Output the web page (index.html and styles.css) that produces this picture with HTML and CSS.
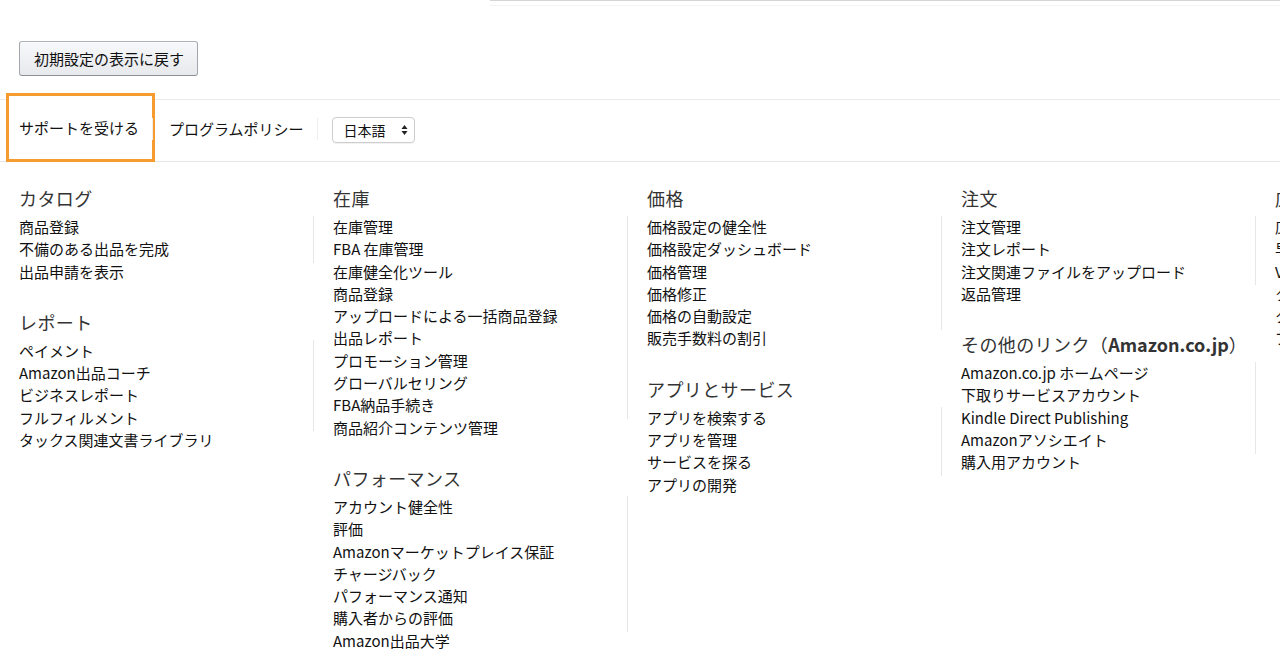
FILE: index.html
```html
<!DOCTYPE html>
<html lang="ja">
<head>
  <meta charset="utf-8">
  <title>セラーセントラル - メニュー</title>
  <link rel="stylesheet" href="styles.css">
</head>
<body>
  <div class="top-edge"></div>

  <div class="reset-row">
    <button class="reset-button">初期設定の表示に戻す</button>
  </div>

  <div class="footer-bar">
    <a href="#" class="footer-link focused">サポートを受ける</a>
    <span class="footer-sep"></span>
    <a href="#" class="footer-link">プログラムポリシー</a>
    <span class="footer-sep"></span>
    <div class="lang-select">
      <span>日本語</span>
      <svg width="7" height="12" viewBox="0 0 7 12">
        <path d="M3.5 1 L6.5 5 L0.5 5 Z" fill="#222"/>
        <path d="M3.5 11 L6.5 7 L0.5 7 Z" fill="#222"/>
      </svg>
    </div>
  </div>

  <div class="menu-grid">
    <div class="menu-column">
      <div class="menu-section">
        <h3>カタログ</h3>
        <ul>
          <li><a href="#">商品登録</a></li>
          <li><a href="#">不備のある出品を完成</a></li>
          <li><a href="#">出品申請を表示</a></li>
        </ul>
      </div>
      <div class="menu-section">
        <h3>レポート</h3>
        <ul>
          <li><a href="#">ペイメント</a></li>
          <li><a href="#">Amazon出品コーチ</a></li>
          <li><a href="#">ビジネスレポート</a></li>
          <li><a href="#">フルフィルメント</a></li>
          <li><a href="#">タックス関連文書ライブラリ</a></li>
        </ul>
      </div>
    </div>

    <div class="menu-column">
      <div class="menu-section">
        <h3>在庫</h3>
        <ul>
          <li><a href="#">在庫管理</a></li>
          <li><a href="#">FBA 在庫管理</a></li>
          <li><a href="#">在庫健全化ツール</a></li>
          <li><a href="#">商品登録</a></li>
          <li><a href="#">アップロードによる一括商品登録</a></li>
          <li><a href="#">出品レポート</a></li>
          <li><a href="#">プロモーション管理</a></li>
          <li><a href="#">グローバルセリング</a></li>
          <li><a href="#">FBA納品手続き</a></li>
          <li><a href="#">商品紹介コンテンツ管理</a></li>
        </ul>
      </div>
      <div class="menu-section">
        <h3>パフォーマンス</h3>
        <ul>
          <li><a href="#">アカウント健全性</a></li>
          <li><a href="#">評価</a></li>
          <li><a href="#">Amazonマーケットプレイス保証</a></li>
          <li><a href="#">チャージバック</a></li>
          <li><a href="#">パフォーマンス通知</a></li>
          <li><a href="#">購入者からの評価</a></li>
          <li><a href="#">Amazon出品大学</a></li>
        </ul>
      </div>
    </div>

    <div class="menu-column">
      <div class="menu-section">
        <h3>価格</h3>
        <ul>
          <li><a href="#">価格設定の健全性</a></li>
          <li><a href="#">価格設定ダッシュボード</a></li>
          <li><a href="#">価格管理</a></li>
          <li><a href="#">価格修正</a></li>
          <li><a href="#">価格の自動設定</a></li>
          <li><a href="#">販売手数料の割引</a></li>
        </ul>
      </div>
      <div class="menu-section">
        <h3>アプリとサービス</h3>
        <ul>
          <li><a href="#">アプリを検索する</a></li>
          <li><a href="#">アプリを管理</a></li>
          <li><a href="#">サービスを探る</a></li>
          <li><a href="#">アプリの開発</a></li>
        </ul>
      </div>
    </div>

    <div class="menu-column">
      <div class="menu-section">
        <h3>注文</h3>
        <ul>
          <li><a href="#">注文管理</a></li>
          <li><a href="#">注文レポート</a></li>
          <li><a href="#">注文関連ファイルをアップロード</a></li>
          <li><a href="#">返品管理</a></li>
        </ul>
      </div>
      <div class="menu-section">
        <h3>その他のリンク（<b>Amazon.co.jp</b>）</h3>
        <ul>
          <li><a href="#">Amazon.co.jp ホームページ</a></li>
          <li><a href="#">下取りサービスアカウント</a></li>
          <li><a href="#">Kindle Direct Publishing</a></li>
          <li><a href="#">Amazonアソシエイト</a></li>
          <li><a href="#">購入用アカウント</a></li>
        </ul>
      </div>
    </div>

    <div class="menu-column">
      <div class="menu-section">
        <h3>広告</h3>
        <ul>
          <li><a href="#">広告キャンペーンマネージャー</a></li>
          <li><a href="#">早期レビュー取得プログラム</a></li>
          <li><a href="#">Vine</a></li>
          <li><a href="#">クーポン</a></li>
          <li><a href="#">タイムセール</a></li>
          <li><a href="#">プロモーション</a></li>
        </ul>
      </div>
    </div>
  </div>
</body>
</html>
```

FILE: styles.css
```css
:root {
  --text-color: #111;
  --heading-color: #333;
  --line-color: #e7e7e7;
  --focus-color: #f59b2f;
}

html, body {
  overflow: hidden;
}

body {
  margin: 0;
  font-family: "Noto Sans CJK JP", "Noto Sans", sans-serif;
  color: var(--text-color);
  background: #fff;
  width: 1280px;
}

a {
  color: var(--text-color);
  text-decoration: none;
}

.top-edge {
  margin-left: 490px;
  height: 4px;
  border-top: 1px solid #d6d6d6;
  border-bottom: 1px solid #f4f4f4;
}

.reset-row {
  padding: 35px 19px 0;
}

.reset-button {
  height: 35px;
  padding: 0 13px 0 14px;
  font-family: inherit;
  font-size: 15px;
  color: #111;
  background: linear-gradient(#f7f8fa, #e7e9ec);
  border: 1px solid #adb1b8;
  border-color: #adb1b8 #a2a6ac #8d9096;
  border-radius: 3px;
  box-shadow: 0 1px 0 rgba(255, 255, 255, 0.6) inset;
}

.footer-bar {
  display: flex;
  align-items: center;
  margin-top: 23px;
  height: 58px;
  padding: 0 0 3px 9px;
  border-top: 1px solid #eaeaea;
  border-bottom: 1px solid #e6e6e6;
  font-size: 15px;
}

.footer-link {
  display: flex;
  align-items: center;
  height: 22px;
  line-height: 22px;
}

.footer-link.focused {
  align-self: flex-start;
  height: 63px;
  margin-top: -4px;
  padding: 0 13px 0 10px;
  background: #fff;
  outline: 3px solid var(--focus-color);
}

.footer-link + .footer-sep + .footer-link {
  padding: 0 13px 0 16px;
}

.footer-sep {
  width: 1px;
  height: 22px;
  background: #eeeeee;
}

.lang-select {
  display: flex;
  align-items: center;
  justify-content: space-between;
  box-sizing: border-box;
  width: 83px;
  height: 26px;
  margin: 2px 0 0 14px;
  padding: 0 6px 0 11px;
  font-size: 14px;
  border: 1px solid #cdcdcd;
  border-radius: 4px;
  box-shadow: 0 1px 1px rgba(0, 0, 0, 0.06);
}

.menu-grid {
  display: grid;
  grid-template-columns: repeat(5, 314px);
  padding: 24px 0 0 19px;
}

.menu-section + .menu-section {
  margin-top: 27px;
}

.menu-section h3 {
  margin: 0 0 6px;
  font-size: 18px;
  font-weight: 400;
  line-height: 24px;
  letter-spacing: 0.4px;
  color: var(--heading-color);
}

.menu-section h3 b {
  font-weight: 700;
  letter-spacing: 0;
}

.menu-section ul {
  list-style: none;
  margin: 0 19px 0 0;
  padding: 0;
  font-size: 15px;
  line-height: 22.3px;
  background: linear-gradient(var(--line-color), var(--line-color)) no-repeat right top / 1px calc(100% - 20px);
}

.menu-section li {
  white-space: nowrap;
}
```
